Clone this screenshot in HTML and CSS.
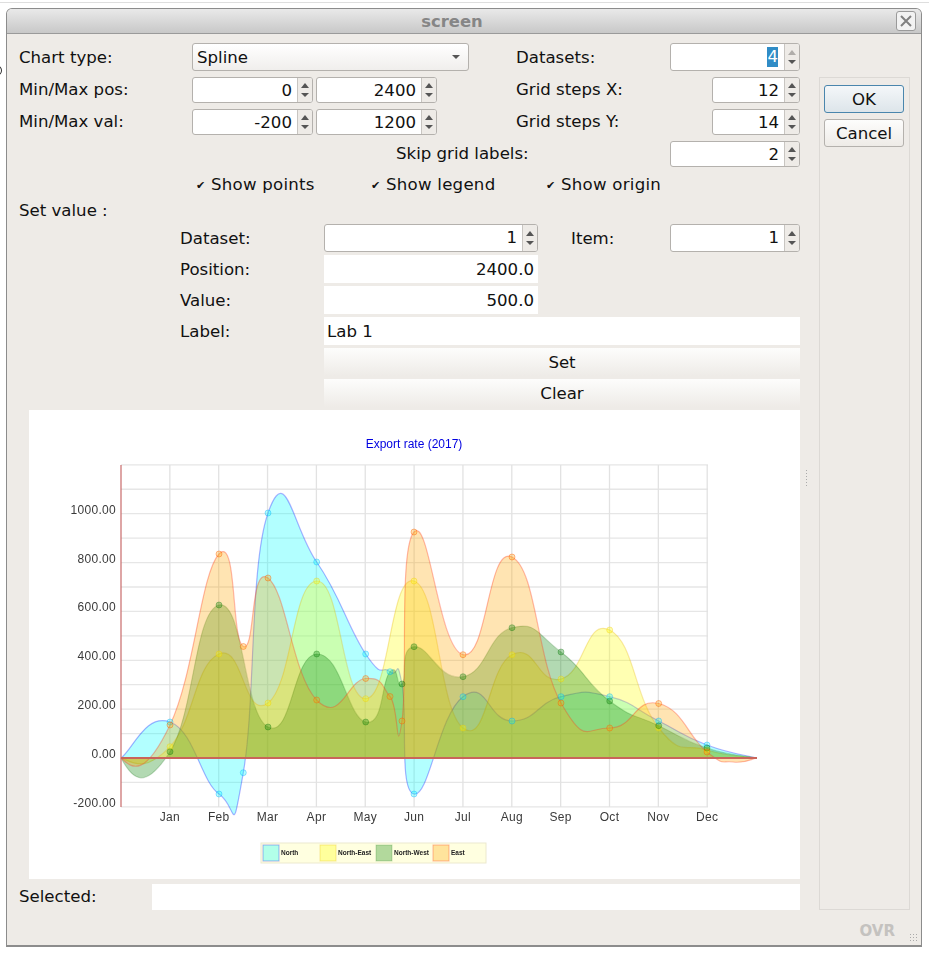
FILE: index.html
```html
<!DOCTYPE html>
<html lang="en">
<head>
  <meta charset="UTF-8">
  <meta name="viewport" content="width=device-width, initial-scale=1.0">
  <title>screen</title>
  <link rel="stylesheet" href="styles.css">
</head>
<body>
  <div class="page-line"></div>
  <i class="stray-arc"></i>
  <div class="window">
    <div class="titlebar">
      <span class="title">screen</span>
      <span class="close-btn">
        <svg width="18" height="18" viewBox="0 0 18 18"><path d="M4 4L14 14M14 4L4 14" stroke="#808080" stroke-width="2" fill="none"/></svg>
      </span>
    </div>

    <div class="content">
      <div class="main">
        <div class="top-grid">
          <span class="lbl c-first">Chart type:</span>
          <div class="combo">
            <span>Spline</span>
            <i class="combo-arrow"></i>
          </div>
          <span class="lbl c-right-lbl">Datasets:</span>
          <div class="spin c-wide">
            <span class="spin-val"><span class="selected">4</span></span>
            <span class="spin-btns"><i class="up off"></i><i class="down"></i></span>
          </div>

          <span class="lbl tight c-first">Min/Max pos:</span>
          <div class="spin c-min">
            <span class="spin-val">0</span>
            <span class="spin-btns"><i class="up"></i><i class="down"></i></span>
          </div>
          <div class="spin c-max">
            <span class="spin-val">2400</span>
            <span class="spin-btns"><i class="up"></i><i class="down"></i></span>
          </div>
          <span class="lbl tight c-right-lbl">Grid steps X:</span>
          <div class="spin c-narrow">
            <span class="spin-val">12</span>
            <span class="spin-btns"><i class="up"></i><i class="down"></i></span>
          </div>

          <span class="lbl tight c-first">Min/Max val:</span>
          <div class="spin c-min">
            <span class="spin-val">-200</span>
            <span class="spin-btns"><i class="up"></i><i class="down"></i></span>
          </div>
          <div class="spin c-max">
            <span class="spin-val">1200</span>
            <span class="spin-btns"><i class="up"></i><i class="down"></i></span>
          </div>
          <span class="lbl tight c-right-lbl">Grid steps Y:</span>
          <div class="spin c-narrow">
            <span class="spin-val">14</span>
            <span class="spin-btns"><i class="up"></i><i class="down"></i></span>
          </div>

          <span class="lbl tight c-skip">Skip grid labels:</span>
          <div class="spin c-wide">
            <span class="spin-val">2</span>
            <span class="spin-btns"><i class="up"></i><i class="down"></i></span>
          </div>
        </div>

        <div class="checks">
          <span class="check"><b>✔</b>Show points</span>
          <span class="check"><b>✔</b>Show legend</span>
          <span class="check"><b>✔</b>Show origin</span>
        </div>

        <div class="set-title">Set value :</div>

        <div class="set-grid">
          <span class="lbl s-first">Dataset:</span>
          <div class="spin s-val">
            <span class="spin-val">1</span>
            <span class="spin-btns"><i class="up"></i><i class="down"></i></span>
          </div>
          <span class="lbl s-item">Item:</span>
          <div class="spin s-item-val">
            <span class="spin-val">1</span>
            <span class="spin-btns"><i class="up"></i><i class="down"></i></span>
          </div>

          <span class="lbl s-first">Position:</span>
          <div class="field num s-val">2400.0</div>

          <span class="lbl s-first">Value:</span>
          <div class="field num s-val">500.0</div>

          <span class="lbl s-first">Label:</span>
          <div class="field s-all">Lab 1</div>

          <div class="flat-btn s-all">Set</div>
          <div class="flat-btn s-all">Clear</div>
        </div>

        <div class="chart-box">
          <svg id="chart" width="771" height="469" viewBox="29 410 771 469"></svg>
        </div>

        <div class="selected-row">
          <span class="lbl tight">Selected:</span>
          <div class="field selected-field"></div>
        </div>
      </div>

      <div class="side">
        <div class="btn default">OK</div>
        <div class="btn">Cancel</div>
      </div>

      <div class="grip"></div>
    </div>

    <div class="status">
      <span class="ovr">OVR</span>
    </div>
  </div>
  <script src="chart.js"></script>
</body>
</html>
```

FILE: styles.css
```css
html, body {
  margin: 0;
  height: 100%;
}

body {
  background: #fff;
  font-family: "DejaVu Sans", sans-serif;
  font-size: 16.6px;
  color: #111;
  overflow: hidden;
  padding: 0 7px 0 6px;
  box-sizing: border-box;
  position: relative;
}

.page-line {
  height: 1px;
  margin: 2px -7px 5px -6px;
  background: #dedede;
}

.stray-arc {
  position: absolute;
  left: -6px;
  top: 66px;
  width: 6px;
  height: 7px;
  border: 1px solid #333;
  border-radius: 50%;
}

.window {
  height: 939px;
  box-sizing: border-box;
  background: #eeebe7;
  border: 1px solid #8c8c8c;
  border-bottom: 2px solid #8c8c8c;
  border-radius: 6px 6px 0 0;
  display: flex;
  flex-direction: column;
}

.titlebar {
  height: 24px;
  flex: none;
  position: relative;
  background: linear-gradient(#e9e9e9, #c8c8c8);
  border-bottom: 1px solid #9a9a9a;
  border-radius: 5px 5px 0 0;
  text-align: center;
  line-height: 25px;
  padding-right: 24px;
}

.title {
  color: #868686;
  font-weight: bold;
  font-size: 16.4px;
}

.close-btn {
  position: absolute;
  right: 5px;
  top: 2px;
  width: 18px;
  height: 18px;
  border: 1px solid #9a9a9a;
  border-radius: 3px;
  background: #f2f2f2;
}

.close-btn svg {
  display: block;
}

.content {
  flex: 1;
  display: flex;
  min-height: 0;
  position: relative;
}

.main {
  width: 793px;
  padding: 9px 0 0 12px;
  box-sizing: border-box;
  flex: none;
}

.lbl {
  display: flex;
  align-items: center;
  white-space: nowrap;
}

.lbl.tight {
  padding-bottom: 2px;
}

.top-grid {
  display: grid;
  grid-template-columns: 173px 121px 3px 121px 32px 47px 154px 42px 88px;
  grid-template-rows: 28px 26px 26px 26px;
  row-gap: 6px;
}

.c-first { grid-column: 1; }
.c-min { grid-column: 2; }
.c-max { grid-column: 4; }
.c-right-lbl { grid-column: 7; }
.c-wide { grid-column: 8 / 10; }
.c-narrow { grid-column: 9; }
.c-skip { grid-column: 4 / 8; padding-left: 80px; }

.combo {
  grid-column: 2 / 6;
  display: flex;
  align-items: center;
  justify-content: space-between;
  padding: 0 8px 0 4px;
  box-sizing: border-box;
  background: linear-gradient(#fff, #f0eeec);
  border: 1px solid #b4b1ad;
  border-radius: 3px;
}

.combo-arrow {
  width: 0;
  height: 0;
  border-left: 4px solid transparent;
  border-right: 4px solid transparent;
  border-top: 4px solid #555;
}

.spin {
  display: flex;
  box-sizing: border-box;
  background: #fff;
  border: 1px solid #b4b1ad;
  border-radius: 3px;
  overflow: hidden;
  min-width: 0;
}

.spin-val {
  flex: 1;
  text-align: right;
  padding-right: 5px;
  line-height: 26px;
}

.top-grid .spin-val { line-height: 25px; }

.selected {
  background: #308cc6;
  color: #fff;
  display: inline-block;
  line-height: 20px;
  margin-right: 1px;
}

.spin-btns {
  width: 14px;
  flex: none;
  background: #eeebe7;
  border-left: 1px solid #c8c5c1;
  display: flex;
  flex-direction: column;
  align-items: center;
  justify-content: center;
  gap: 5px;
}

.spin-btns i {
  width: 0;
  height: 0;
  border-left: 4px solid transparent;
  border-right: 4px solid transparent;
}

.spin-btns .up { border-bottom: 5px solid #555; }
.spin-btns .up.off { border-bottom-color: #b0adaa; }
.spin-btns .down { border-top: 4px solid #555; }

.checks {
  display: flex;
  height: 24px;
  margin-top: 5px;
  padding-left: 177px;
  align-items: center;
}

.check {
  width: 175px;
  white-space: nowrap;
  letter-spacing: 0.25px;
}

.check b {
  display: inline-block;
  width: 15px;
  font-size: 11px;
  font-weight: bold;
  letter-spacing: 0;
  vertical-align: 1px;
}

.set-title {
  height: 20px;
  line-height: 22px;
  margin-top: 4px;
}

.set-grid {
  display: grid;
  grid-template-columns: 144px 214px 33px 99px 130px;
  grid-auto-rows: 28px;
  row-gap: 3px;
  padding-left: 161px;
  margin-top: 4px;
}

.s-first { grid-column: 1; }
.s-val { grid-column: 2; }
.s-item { grid-column: 4; }
.s-item-val { grid-column: 5; }
.s-all { grid-column: 2 / 6; }

.field {
  background: #fff;
  line-height: 30px;
  padding: 0 4px 0 3px;
  box-sizing: border-box;
}

.num { text-align: right; }

.flat-btn {
  background: linear-gradient(#fdfdfc, #eeebe7);
  text-align: center;
  line-height: 30px;
}

.chart-box {
  margin: 3px 0 0 10px;
  width: 771px;
  height: 469px;
  background: #fff;
}

#chart {
  display: block;
  filter: blur(0.35px);
}

.selected-row {
  display: flex;
  height: 26px;
  margin-top: 5px;
}

.selected-row .lbl {
  width: 133px;
  flex: none;
}

.selected-field {
  width: 648px;
}

.side {
  margin: 43px 0 0 19px;
  width: 91px;
  height: 833px;
  box-sizing: border-box;
  border: 1px solid #dcd9d5;
  padding: 7px 5px 7px 4px;
  display: flex;
  flex-direction: column;
  gap: 6px;
}

.btn {
  height: 28px;
  box-sizing: border-box;
  border: 1px solid #b4b1ad;
  border-radius: 3px;
  background: linear-gradient(#fdfdfc, #eeebe7);
  text-align: center;
  line-height: 27px;
}

.btn.default {
  border-color: #4a86ad;
  background: linear-gradient(#f4f7f9, #dde5ea);
}

.grip {
  position: absolute;
  left: 799px;
  top: 436px;
  width: 1px;
  height: 16px;
  background-image: linear-gradient(#aaa 1px, transparent 1px);
  background-size: 1px 3px;
}

.status {
  height: 36px;
  flex: none;
  position: relative;
}

.ovr {
  position: absolute;
  right: 26px;
  bottom: 5px;
  color: #c4c2bf;
  font-weight: bold;
  font-size: 15px;
}

.status::after {
  content: "";
  position: absolute;
  right: 3px;
  bottom: 3px;
  width: 9px;
  height: 9px;
  background-image: radial-gradient(#aaa 35%, transparent 40%);
  background-size: 3px 3px;
}

.axis-lbl {
  font-family: "Liberation Sans", sans-serif;
  font-size: 12px;
  letter-spacing: 0.3px;
  fill: #3a3a3a;
}

.chart-title {
  font-family: "Liberation Sans", sans-serif;
  font-size: 12px;
  fill: #0000e0;
}

.legend-lbl {
  font-family: "Liberation Sans", sans-serif;
  font-size: 6.5px;
  font-weight: bold;
  fill: #222;
}
```

FILE: chart.js
```js
// chart data, pixel coordinates inside the dialog
// a third value of 0 marks a shaping point that gets no dot
// dip is the y of the first control point, the curves leave the origin downwards
const NS = "http://www.w3.org/2000/svg";
const svg = document.getElementById("chart");
const X0 = 121, Y0 = 758, STEP = 48.85, END = 757;
const mx = m => X0 + m * STEP;
const vy = v => Y0 - v * 0.2443;

const months = ["Jan", "Feb", "Mar", "Apr", "May", "Jun", "Jul", "Aug", "Sep", "Oct", "Nov", "Dec"];

const series = [
  { name: "North", fill: "rgba(0,255,255,.3)", line: "rgba(0,0,255,.3)", dot: "rgba(0,160,255,.35)",
    pts: [[170,722],[219,794],[243.3,772.7],[268,513],[316.7,562],[365.7,654],[390,671.7],[402,684,0],[414,794],[463,696.7],[512,721],[561,696.7],[609.7,696.7],[658.7,721],[707,745]] },
  { name: "North-East", fill: "rgba(255,255,0,.3)", line: "rgba(230,180,0,.3)", dot: "rgba(240,200,0,.35)", dip: 763,
    pts: [[170,746.7],[219,654],[268,703],[316.7,581],[365.7,698.7],[414,581],[463,728],[512,654.7],[561,679],[609.7,630],[658.7,728],[707,750]] },
  { name: "North-West", fill: "rgba(0,128,0,.3)", line: "rgba(0,100,0,.2)", dot: "rgba(0,110,0,.3)", dip: 781,
    pts: [[170,751.7],[219,605],[268,727],[316.7,654],[365.7,722],[390,671.7,0],[402,684],[414,646.7],[463,676.7],[512,627.7],[561,652],[609.7,701],[658.7,725.7],[707,748]] },
  { name: "East", fill: "rgba(255,165,0,.3)", line: "rgba(255,60,30,.35)", dot: "rgba(255,90,0,.4)", dip: 770,
    pts: [[170,725],[219,554],[243.3,646.5],[268,578],[316.7,700],[365.7,678.5],[390,696.5],[402,721],[414,532],[463,654.7],[512,557],[561,703],[609.7,728],[658.7,703.5],[707,752],[733,762,0]] }
];

function el(name, attrs, text) {
  const n = document.createElementNS(NS, name);
  for (const k in attrs) n.setAttribute(k, attrs[k]);
  if (text) n.textContent = text;
  svg.appendChild(n);
  return n;
}

function spline(pts, dip) {
  let d = "M" + pts[0][0] + " " + pts[0][1];
  for (let i = 0; i < pts.length - 1; i++) {
    const p0 = pts[i - 1] || pts[i], p1 = pts[i], p2 = pts[i + 1], p3 = pts[i + 2] || p2;
    const k = 4;
    let c1y = p1[1] + (p2[1] - p0[1]) / k;
    if (i === 0 && dip) c1y = dip;
    d += " C" + (p1[0] + (p2[0] - p0[0]) / k) + " " + c1y + " " +
      (p2[0] - (p3[0] - p1[0]) / k) + " " + (p2[1] - (p3[1] - p1[1]) / k) + " " + p2[0] + " " + p2[1];
  }
  return d;
}

// grid
for (let v = -200; v <= 1200; v += 100) {
  el("line", { x1: X0, x2: 708, y1: vy(v), y2: vy(v), stroke: "#e6e6e6", "stroke-width": 1.3 });
  if (v % 200 === 0 && v < 1200) {
    el("text", { x: 116, y: vy(v), "text-anchor": "end", class: "axis-lbl" }, v.toFixed(2));
  }
}
months.forEach((m, i) => {
  el("line", { x1: mx(i + 1), x2: mx(i + 1), y1: 465, y2: 807, stroke: "#e2e2e2", "stroke-width": 1.3 });
  el("text", { x: mx(i + 1), y: 821, "text-anchor": "middle", class: "axis-lbl" }, m);
});

el("text", { x: 414, y: 448, "text-anchor": "middle", class: "chart-title" }, "Export rate (2017)");

// areas, then points on top of them
series.forEach(s => {
  const all = [[X0, Y0]].concat(s.pts, [[END, Y0]]);
  const d = spline(all, s.dip);
  el("path", { d: d + " Z", fill: s.fill, stroke: "none" });
  el("path", { d: d, fill: "none", stroke: s.line, "stroke-width": 1.2 });
});
series.forEach(s => {
  s.pts.forEach(p => {
    if (p[2] === 0) return;
    el("circle", { cx: p[0], cy: p[1], r: 3, fill: s.fill, stroke: s.dot });
  });
});

el("line", { x1: X0, x2: X0, y1: 465, y2: 807, stroke: "#c86a6a", "stroke-width": 1.2 });
el("line", { x1: X0, x2: END, y1: Y0, y2: Y0, stroke: "#c9655a", "stroke-width": 1.8 });

// legend
el("rect", { x: 261, y: 843, width: 225, height: 20, fill: "#ffffe0", stroke: "#ece9cf" });
const legendX = [263, 320, 376, 433];
series.forEach((s, i) => {
  el("rect", { x: legendX[i], y: 845, width: 16, height: 16, fill: s.fill, stroke: s.line });
  el("text", { x: legendX[i] + 18, y: 855, class: "legend-lbl" }, s.name);
});
```
